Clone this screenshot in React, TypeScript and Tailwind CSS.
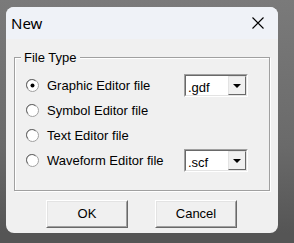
import React from "react";

const ui = { fontFamily: '"Liberation Sans", Arial, sans-serif' };
const title = { fontFamily: '"Noto Sans", "Open Sans", sans-serif' };

function Radio({ checked }: { checked?: boolean }) {
  return (
    <svg width="13" height="13" viewBox="0 0 13 13" className="shrink-0">
      <circle cx="6.5" cy="6.5" r="6" fill="#ffffff" stroke="#a0a0a0" />
      <path d="M2 9.5 A5.2 5.2 0 0 1 9.5 2" stroke="#696969" fill="none" />
      {checked && <circle cx="6.5" cy="6.5" r="2" fill="#000000" />}
    </svg>
  );
}

function Combo({ value }: { value: string }) {
  return (
    <div className="flex h-[23px] w-[64px] border border-t-[#a0a0a0] border-l-[#a0a0a0] border-r-white border-b-white">
      <div className="flex flex-1 border border-t-[#696969] border-l-[#696969] border-r-[#e3e3e3] border-b-[#e3e3e3] bg-white">
        <span className="flex-1 pl-[2px] pt-[2px] text-[13px] text-black">{value}</span>
        <div className="flex w-[18px] items-center justify-center border border-t-[#e3e3e3] border-l-[#e3e3e3] border-r-[#696969] border-b-[#696969] bg-[#f0f0f0]">
          <svg width="8" height="4" viewBox="0 0 8 4">
            <path d="M0 0 H8 L4 4 Z" fill="#000000" />
          </svg>
        </div>
      </div>
    </div>
  );
}

function Row({
  label,
  checked,
  combo,
}: {
  label: string;
  checked?: boolean;
  combo?: string;
}) {
  return (
    <div className="flex h-[25px] items-center">
      <Radio checked={checked} />
      <span className="ml-[8px] flex-1 text-[13px] text-black">{label}</span>
      {combo && <Combo value={combo} />}
    </div>
  );
}

function Button({ label }: { label: string }) {
  return (
    <div className="flex h-[28px] w-[82px] border border-t-white border-l-white border-r-[#696969] border-b-[#696969]">
      <div className="flex flex-1 items-center justify-center border border-t-[#e3e3e3] border-l-[#e3e3e3] border-r-[#a0a0a0] border-b-[#a0a0a0] bg-[#f0f0f0] text-[13px] text-black">
        {label}
      </div>
    </div>
  );
}

export default function App() {
  return (
    <div
      className="h-[243px] w-[294px] overflow-hidden pl-[6px] pt-[7px]"
      style={{ ...ui, background: "linear-gradient(180deg, #7a7a7a 0%, #6a6a6a 60%, #555555 96%)" }}
    >
      <div className="flex h-[226px] w-[272px] flex-col overflow-hidden rounded-[8px] bg-[#f0f0f0]">
        <div className="flex h-[32px] items-center justify-between bg-[#eff2f7] pl-[5px] pr-[14px]">
          <span className="text-[15px] text-black" style={title}>
            New
          </span>
          <svg width="12" height="12" viewBox="0 0 12 12">
            <path d="M0.5 0.5 L11.5 11.5 M11.5 0.5 L0.5 11.5" stroke="#000000" strokeWidth="1.1" />
          </svg>
        </div>
        <div className="px-[8px] pt-[18px]">
          <div className="relative h-[134px] border border-[#a0a0a0] shadow-[inset_1px_1px_0_#ffffff,1px_1px_0_#ffffff] pl-[11px] pr-[21px] pt-[15px]">
            <span className="absolute left-[6px] top-[-8px] bg-[#f0f0f0] px-[3px] text-[13px] leading-[15px] text-black">
              File Type
            </span>
            <Row label="Graphic Editor file" checked combo=".gdf" />
            <Row label="Symbol Editor file" />
            <Row label="Text Editor file" />
            <Row label="Waveform Editor file" combo=".scf" />
          </div>
          <div className="mt-[9px] flex justify-between pl-[32px] pr-[33px]">
            <Button label="OK" />
            <Button label="Cancel" />
          </div>
        </div>
      </div>
    </div>
  );
}
